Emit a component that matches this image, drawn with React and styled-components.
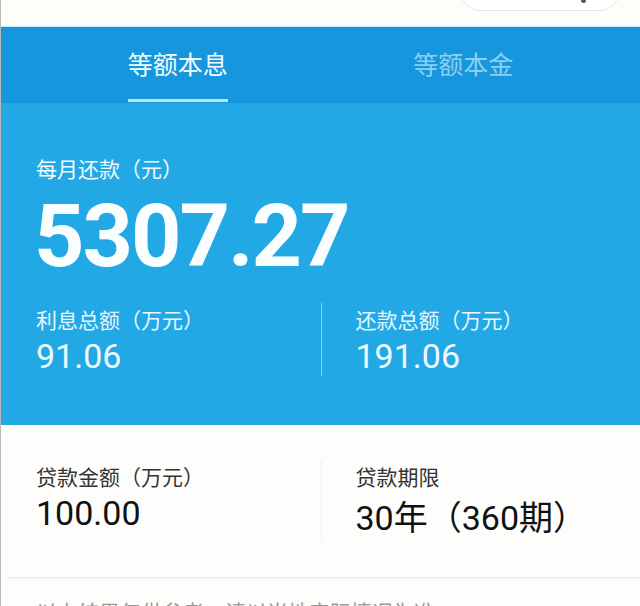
import React from "react"
import styled, { createGlobalStyle } from "styled-components"

const GlobalStyle = createGlobalStyle`
  html, body {
    margin: 0;
    padding: 0;
    background: #fdfdfb;
  }
  body {
    font-family: Roboto, "Noto Sans CJK SC", sans-serif;
    -webkit-font-smoothing: antialiased;
  }
`

const Page = styled.div`
  width: 640px;
  height: 606px;
  overflow: hidden;
  background: #fdfdfb;
  border-left: 1px solid #b8b8b8;
  box-sizing: border-box;
`

const TopBar = styled.div`
  position: relative;
  height: 27px;
  background: #fdfdfa;
  border-bottom: 1px solid #bdeefa;
  box-sizing: border-box;
`

const Capsule = styled.div`
  position: absolute;
  left: 459px;
  top: -30px;
  width: 160px;
  height: 41px;
  border: 1px solid #e6e6e4;
  border-radius: 22px;
  background: #fff;
  box-sizing: border-box;

  &::after {
    content: "";
    position: absolute;
    left: 120px;
    top: 28px;
    width: 5px;
    height: 4px;
    border-radius: 50%;
    background: #555;
  }
`

const Tabs = styled.div`
  display: grid;
  grid-template-columns: 1fr 1fr;
  padding: 0 34px;
  height: 76px;
  background: #1697dd;
`

const Tab = styled.div`
  display: flex;
  flex-direction: column;
  align-items: center;
  padding-top: 18px;
`

const TabLabel = styled.span`
  font-family: "Noto Sans CJK SC", sans-serif;
  font-size: 25px;
  line-height: 36px;
  color: ${p => (p.$active ? "#f4fcff" : "#8ccff2")};
`

const Underline = styled.span`
  margin-top: 18px;
  width: 100px;
  height: 3px;
  background: ${p => (p.$active ? "#b4ebfb" : "transparent")};
`

const Summary = styled.section`
  background: #23a8e6;
  padding: 52px 0 49px;
  color: #f2fbff;
`

const Caption = styled.div`
  font-family: Roboto, "Noto Sans CJK SC", sans-serif;
  font-size: 21px;
  line-height: 30px;
  padding-left: 35px;
`

const BigNumber = styled.div`
  margin-top: 7px;
  padding-left: 33px;
  font-family: Roboto, sans-serif;
  font-weight: 700;
  font-size: 88px;
  line-height: 88px;
  letter-spacing: -2px;
  color: #fbfeff;
`

const StatRow = styled.div`
  display: grid;
  grid-template-columns: 1fr 1fr;
  margin-top: ${p => p.$top || "0"};
`

const Stat = styled.div`
  display: flex;
  flex-direction: column;
  padding: 3px 0 0 35px;
  ${p => p.$divider && `
    border-left: 1px solid ${p.$divider};
    padding-left: 34px;
  `}
`

const StatLabel = styled.div`
  font-family: Roboto, "Noto Sans CJK SC", sans-serif;
  font-size: 21px;
  line-height: 30px;
  color: ${p => p.$color};
`

const StatValue = styled.div`
  margin-top: ${p => p.$shift || "0"};
  padding-bottom: ${p => p.$bottom || "0"};
  font-family: Roboto, "Noto Sans CJK SC", sans-serif;
  font-size: 34px;
  line-height: 40px;
  color: ${p => p.$color};
`

const Loan = styled.section`
  background: #fdfdfb;
  padding: 35px 0 35px;
`

const Separator = styled.div`
  margin-left: 7px;
  height: 2px;
  background: #efefee;
`

const Notice = styled.p`
  margin: 0;
  padding: 17px 0 0 35px;
  font-family: "Noto Sans CJK SC", sans-serif;
  font-size: 21px;
  line-height: 30px;
  color: #9a9a9a;
`

const tabs = [
  { label: "等额本息", active: true },
  { label: "等额本金", active: false },
]

export default function App() {
  return (
    <Page>
      <GlobalStyle />
      <TopBar>
        <Capsule />
      </TopBar>
      <Tabs>
        {tabs.map(t => (
          <Tab key={t.label}>
            <TabLabel $active={t.active}>{t.label}</TabLabel>
            <Underline $active={t.active} />
          </Tab>
        ))}
      </Tabs>
      <Summary>
        <Caption>每月还款（元）</Caption>
        <BigNumber>5307.27</BigNumber>
        <StatRow $top="23px">
          <Stat>
            <StatLabel $color="#e8f7fe">利息总额（万元）</StatLabel>
            <StatValue $color="#eef9ff">91.06</StatValue>
          </Stat>
          <Stat $divider="rgba(255,255,255,0.45)">
            <StatLabel $color="#e8f7fe">还款总额（万元）</StatLabel>
            <StatValue $color="#eef9ff">191.06</StatValue>
          </Stat>
        </StatRow>
      </Summary>
      <Loan>
        <StatRow>
          <Stat>
            <StatLabel $color="#333">贷款金额（万元）</StatLabel>
            <StatValue $color="#111">100.00</StatValue>
          </Stat>
          <Stat $divider="#efefee">
            <StatLabel $color="#333">贷款期限</StatLabel>
            <StatValue $color="#111" $shift="5px" $bottom="4px">30年（360期）</StatValue>
          </Stat>
        </StatRow>
      </Loan>
      <Separator />
      <Notice>以上结果仅供参考，请以当地实际情况为准</Notice>
    </Page>
  )
}
